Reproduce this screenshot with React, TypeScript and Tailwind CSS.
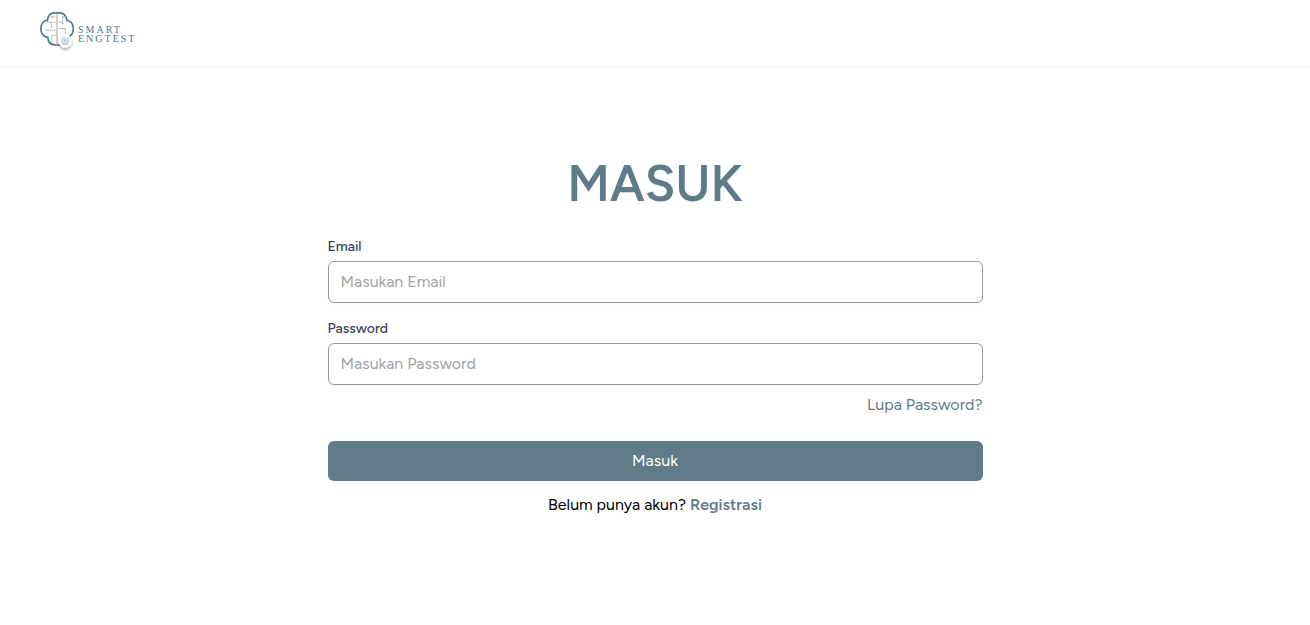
import React from "react";

function BrainMark() {
  return (
    <svg viewBox="0 0 40 44" className="h-11 w-10 shrink-0" fill="none" aria-hidden="true">
      <defs>
        <filter id="badge-shadow" x="-40%" y="-40%" width="180%" height="200%">
          <feDropShadow dx="0" dy="2" stdDeviation="1.4" floodColor="#000000" floodOpacity="0.35" />
        </filter>
      </defs>
      <path
        d="M14.5 2.8C10.6 2.8 7.6 5.8 7.6 10.2C3.6 10.6 0.9 14 0.9 18.6C0.9 23.4 3.6 26.8 7.8 27.4C8 32 10.8 34.8 15 34.9H19.4C23.6 34.8 26.4 32 26.6 27.4C30.8 26.8 33.3 23.4 33.3 18.6C33.3 14 30.6 10.6 26.6 10.2C26.6 5.8 23.6 2.8 19.7 2.8Z"
        stroke="#4b7b8d"
        strokeWidth="1.7"
        strokeLinejoin="round"
      />
      <path d="M17 4V34.7" stroke="#e6c8bb" strokeWidth="1.9" />
      <path
        d="M15.6 6.8H12V8.2M15.6 12.2H7.2M11.6 12.2V16.8M15.6 20.2H6M15.6 25.6H11.6V31M18.6 12.2H22.8V7.2H26M18.6 18.6H25.4V23.2M22.7 12.2V14.4"
        stroke="#9db7c1"
        strokeWidth="0.8"
      />
      <g fill="#d8a08a">
        <circle cx="12" cy="6.9" r="0.8" />
        <circle cx="7.2" cy="12.2" r="0.7" />
        <circle cx="11.6" cy="16.8" r="0.8" />
        <circle cx="6" cy="20.2" r="0.8" />
        <circle cx="11.6" cy="31.2" r="0.8" />
        <circle cx="22.7" cy="13.4" r="0.8" />
        <circle cx="22.7" cy="6.8" r="0.7" />
        <circle cx="25.4" cy="23.2" r="0.8" />
      </g>
      <circle cx="25.2" cy="31.2" r="6.6" fill="#ffffff" filter="url(#badge-shadow)" />
      <rect x="21.6" y="28" width="7" height="4.8" rx="0.8" fill="#dde8ec" stroke="#b3c6ce" strokeWidth="0.8" />
      <path d="M21.8 34.2H28.4M23.6 30.3H26.2" stroke="#9fb4bc" strokeWidth="0.9" />
    </svg>
  );
}

interface FieldProps {
  id: string;
  type: string;
  label: string;
  placeholder: string;
}

function Field({ id, type, label, placeholder }: FieldProps) {
  return (
    <div>
      <label htmlFor={id} className="block text-sm font-medium text-gray-700">
        {label}
      </label>
      <input
        id={id}
        type={type}
        placeholder={placeholder}
        className="mt-1 block w-full rounded-md border border-[#999999] px-3 py-2 text-base leading-6 shadow-xs placeholder:text-[#a3a3a3]"
      />
    </div>
  );
}

export default function App() {
  return (
    <div className="min-h-screen bg-white font-['Figtree','Roboto',sans-serif] text-base text-black">
      <header className="flex h-[68px] items-start border-b-2 border-[#f7f7f7] px-10 pt-[10px]">
        <a href="#" className="flex items-start" aria-label="Smart Engtest">
          <BrainMark />
          <span className="-ml-[2px] pt-[15px] font-['Liberation_Serif',serif] text-[10px] leading-[9px] tracking-[2px] text-[#4b7b8d]">
            SMART
            <br />
            ENGTEST
          </span>
        </a>
      </header>
      <main className="mx-auto w-1/2 pt-[78px]">
        <h1 className="text-center text-[50px] leading-[75px] font-semibold text-[#5f7b87]">MASUK</h1>
        <form className="mt-4" onSubmit={(e) => e.preventDefault()}>
          <div className="space-y-4">
            <Field id="email" type="email" label="Email" placeholder="Masukan Email" />
            <Field id="password" type="password" label="Password" placeholder="Masukan Password" />
          </div>
          <div className="mt-2 text-right">
            <a href="#" className="text-[#5f7b87]">Lupa Password?</a>
          </div>
          <button type="submit" className="mt-6 h-10 w-full rounded-md bg-[#5f7b87] text-white">
            Masuk
          </button>
        </form>
        <p className="mt-3 text-center">
          Belum punya akun? <a href="#" className="font-semibold text-[#5f7b87]">Registrasi</a>
        </p>
      </main>
    </div>
  );
}
